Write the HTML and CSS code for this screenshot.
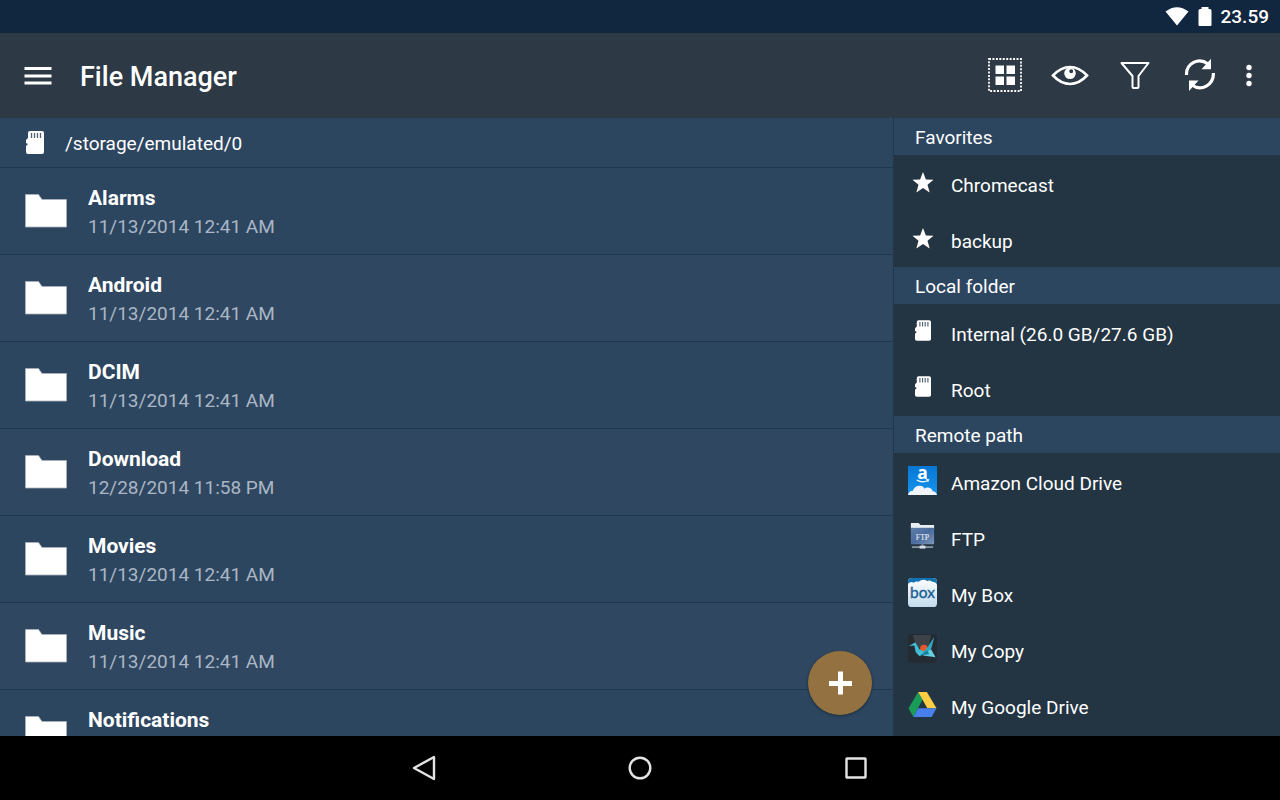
FILE: index.html
```html
<!DOCTYPE html>
<html lang="en">
<head>
<meta charset="utf-8">
<meta name="viewport" content="width=device-width, initial-scale=1">
<title>File Manager</title>
<link rel="stylesheet" href="styles.css">
</head>
<body>
<svg class="defs" aria-hidden="true">
  <symbol id="sd" viewBox="0 0 18 24">
    <path fill="#fff" d="M4 0h12q2 0 2 2v19q0 2-2 2H2q-2 0-2-2v-6l2-2-2-1V9l2-2V2q0-2 2-2z"/>
    <path stroke="#526272" stroke-width="1.300" d="M5.500 2v5M8.500 2v5M11.500 2v5M14.500 2v5"/>
  </symbol>
  <symbol id="folder" viewBox="0 0 42 34">
    <path fill="#fff" stroke="#a9b2bb" stroke-width=".8" d="M.5.5H13.500L17 5.500H41.500V33H.5z"/>
  </symbol>
  <symbol id="star" viewBox="0 0 22 21">
    <path fill="#fff" d="M11 0l2.900 7.500 7.600.3-6 4.900 2.200 7.700L11 16l-6.700 4.400 2.200-7.700-6-4.900 7.600-.3z"/>
  </symbol>
</svg>
<div class="screen">
  <div class="status">
    <svg width="24" height="20" viewBox="0 0 24 20" aria-hidden="true"><path fill="#fff" d="M.5 4.500Q12-4 23.500 4.500L12 18.500z"/></svg>
    <svg width="14" height="20" viewBox="0 0 14 20" aria-hidden="true"><path fill="#fff" d="M3.500 0h7v2H12q1.500 0 1.500 1.500V18q0 1-1 1h-11q-1 0-1-1V3.500Q.5 2 2 2h1.500z"/></svg>
    <time>23.59</time>
  </div>
  <header class="toolbar">
    <button class="icon-button" aria-label="Menu"><svg width="28" height="20" viewBox="0 0 28 20"><path stroke="#fff" stroke-width="2.800" d="M.5 2.500h27M.5 10h27M.5 17h27"/></svg></button>
    <h1>File Manager</h1>
    <div class="actions">
      <button class="icon-button" aria-label="Select all"><svg width="34" height="34" viewBox="0 0 34 34"><path fill="none" stroke="#fff" stroke-width="1.800" stroke-dasharray="2 1.440" d="M1 1h32v32H1z"/><path fill="#fff" d="M7.500 7.500h8.500v8.500H7.500zM18.500 7.500H27v8.500h-8.500zM7.500 18.500h8.500V27H7.500zM18.500 18.500H27V27h-8.500z"/></svg></button>
      <button class="icon-button" aria-label="View"><svg width="38" height="34" viewBox="0 0 38 34"><path fill="none" stroke="#fff" stroke-width="2.600" d="M2 17.500Q10 9 19 9t17 8.500Q28 26 19 26T2 17.500z"/><path fill="#fff" fill-rule="evenodd" d="M19 9.500a5.800 5.800 0 1 1 0 11.600 5.800 5.800 0 0 1 0-11.600zm-.8 3.800a2 2 0 1 0 4 0 2 2 0 0 0-4 0z"/></svg></button>
      <button class="icon-button" aria-label="Filter"><svg width="30" height="34" viewBox="0 0 30 34"><path fill="none" stroke="#fff" stroke-width="2" stroke-linejoin="round" d="M1.500 5h27L18.500 18v11q0 1-1 1h-4q-1 0-1-1V18z"/></svg></button>
      <button class="icon-button" aria-label="Refresh"><svg width="32" height="34" viewBox="0 0 32 34"><path fill="none" stroke="#fff" stroke-width="3.200" d="M2.500 17C2 5 15-1 24 6M29.500 15c0 12-12 19-21.500 12"/><path fill="#fff" d="M27 .8v10.500H17.500zM5 33V22.500h9.500z"/></svg></button>
      <button class="icon-button more" aria-label="More options"><svg width="8" height="24" viewBox="0 0 8 24"><circle cx="4" cy="4.500" r="2.700" fill="#fff"/><circle cx="4" cy="12.500" r="2.700" fill="#fff"/><circle cx="4" cy="20.500" r="2.700" fill="#fff"/></svg></button>
    </div>
  </header>
  <div class="content">
    <main class="browser">
      <div class="path"><svg width="18" height="24" aria-hidden="true"><use href="#sd"/></svg><span>/storage/emulated/0</span></div>
      <ul class="files">
        <li><svg width="42" height="34" aria-hidden="true"><use href="#folder"/></svg><div><h2>Alarms</h2><p>11/13/2014 12:41 AM</p></div></li>
        <li><svg width="42" height="34" aria-hidden="true"><use href="#folder"/></svg><div><h2>Android</h2><p>11/13/2014 12:41 AM</p></div></li>
        <li><svg width="42" height="34" aria-hidden="true"><use href="#folder"/></svg><div><h2>DCIM</h2><p>11/13/2014 12:41 AM</p></div></li>
        <li><svg width="42" height="34" aria-hidden="true"><use href="#folder"/></svg><div><h2>Download</h2><p>12/28/2014 11:58 PM</p></div></li>
        <li><svg width="42" height="34" aria-hidden="true"><use href="#folder"/></svg><div><h2>Movies</h2><p>11/13/2014 12:41 AM</p></div></li>
        <li><svg width="42" height="34" aria-hidden="true"><use href="#folder"/></svg><div><h2>Music</h2><p>11/13/2014 12:41 AM</p></div></li>
        <li><svg width="42" height="34" aria-hidden="true"><use href="#folder"/></svg><div><h2>Notifications</h2></div></li>
      </ul>
      <button class="add" aria-label="Add"><svg width="24" height="24" viewBox="0 0 24 24"><path stroke="#fff" stroke-width="5" d="M12.500.5v23M1 12.500h23"/></svg></button>
    </main>
    <aside class="places">
      <h2>Favorites</h2>
      <ul>
        <li><a href="#chromecast"><svg width="22" height="21" aria-hidden="true"><use href="#star"/></svg><span>Chromecast</span></a></li>
        <li><a href="#backup"><svg width="22" height="21" aria-hidden="true"><use href="#star"/></svg><span>backup</span></a></li>
      </ul>
      <h2>Local folder</h2>
      <ul>
        <li><a href="#internal"><svg width="16" height="22" aria-hidden="true"><use href="#sd"/></svg><span>Internal (26.0 GB/27.6 GB)</span></a></li>
        <li><a href="#root"><svg width="16" height="22" aria-hidden="true"><use href="#sd"/></svg><span>Root</span></a></li>
      </ul>
      <h2>Remote path</h2>
      <ul>
        <li><a href="#amazon"><svg class="logo" width="29" height="29" viewBox="0 0 30 30" aria-hidden="true">
          <defs><linearGradient id="sky" x2="0" y2="1"><stop stop-color="#0877d4"/><stop offset="1" stop-color="#1494ee"/></linearGradient></defs>
          <path fill="url(#sky)" d="M0 0h30v30H0z"/>
          <text class="logo-a" x="15" y="13" text-anchor="middle">a</text>
          <path fill="none" stroke="#fff" stroke-width="1.200" d="M9 14.500q6 3.500 11.500.5M19 14l2.200.2-.8 2"/>
          <path fill="#f1f5f9" d="M0 30q1-4.500 5-4.500 2-5 7-5 4 0 5 3 2-2 5-1 3 1 3.500 3.500 3.500 0 4.500 4z"/></svg><span>Amazon Cloud Drive</span></a></li>
        <li><a href="#ftp"><svg class="logo" width="29" height="29" viewBox="0 0 30 30" aria-hidden="true">
          <defs><linearGradient id="net" x2="1" y2="1"><stop stop-color="#617ea9"/><stop offset=".5" stop-color="#4b6c9d"/><stop offset="1" stop-color="#7d98bd"/></linearGradient></defs>
          <path fill="#e8edf2" d="M3 1h8l2 2h14v4H3z"/><path fill="url(#net)" d="M3 6h24v17H3z"/>
          <text class="logo-ftp" x="15" y="19" text-anchor="middle">FTP</text>
          <path stroke="#8c99a6" stroke-width="1.800" d="M15 23v3M4 26h22"/><path stroke="#d6dde3" stroke-width="3" d="M12 26h6"/></svg><span>FTP</span></a></li>
        <li><a href="#box"><svg class="logo" width="29" height="29" viewBox="0 0 30 30" aria-hidden="true">
          <defs><linearGradient id="pale" x2="0" y2="1"><stop stop-color="#fff"/><stop offset="1" stop-color="#c3dbed"/></linearGradient></defs>
          <rect width="30" height="30" rx="4" fill="url(#pale)"/>
          <path fill="#1273b0" d="M0 6V4q0-4 4-4h22q4 0 4 4v3q-1-3-5-3-2-2-5-1Q15 0 11 4 8 3 6 5 3 3 0 6z"/>
          <text class="logo-box" x="15" y="21" text-anchor="middle">box</text></svg><span>My Box</span></a></li>
        <li><a href="#copy"><svg class="logo" width="29" height="29" viewBox="0 0 30 30" aria-hidden="true">
          <rect width="30" height="30" rx="4" fill="#252b32"/><path fill="#3d4248" d="M5 1h19l-3 13H9z"/>
          <circle cx="16.500" cy="15" r="4" fill="#e4582b"/>
          <path fill="#3ebdd3" d="M1 12.500L7.500 8.500 12 16l7 3-7 4-4-4-1.500-7z"/>
          <path fill="#2ba9c5" d="M27 3l-1 5-3 11-8 1 5-6z"/>
          <path fill="#62d0e2" d="M10 21l8-2 6-3 4.500 8-11-1.500z"/>
          <path fill="#147f9c" d="M12 22l8-5 2 4z"/></svg><span>My Copy</span></a></li>
        <li><a href="#drive"><svg class="logo" width="29" height="29" viewBox="0 0 30 30" aria-hidden="true">
          <path fill="#189c58" d="M10.500 2L.5 19 5.500 28 15 10z"/><path fill="#fdce44" d="M10.500 2h9l10 17H20z"/><path fill="#477fed" d="M10.500 19h19l-5 9h-19z"/></svg><span>My Google Drive</span></a></li>
      </ul>
    </aside>
  </div>
  <nav class="system" aria-label="System">
    <button class="icon-button" aria-label="Back"><svg width="26" height="26" viewBox="0 0 26 26"><path fill="none" stroke="#e4e4e4" stroke-width="2.400" stroke-linejoin="round" d="M23 2v22L3 13z"/></svg></button>
    <button class="icon-button" aria-label="Home"><svg width="26" height="26" viewBox="0 0 26 26"><circle cx="13" cy="13" r="10.300" fill="none" stroke="#e4e4e4" stroke-width="2.400"/></svg></button>
    <button class="icon-button" aria-label="Recent apps"><svg width="26" height="26" viewBox="0 0 26 26"><rect x="3.500" y="3.500" width="19" height="19" rx=".5" fill="none" stroke="#e4e4e4" stroke-width="2.400"/></svg></button>
  </nav>
</div>
</body>
</html>
```
FILE: styles.css
```css
* {
  box-sizing: border-box;
}

body,
h1,
h2,
p,
ul {
  margin: 0;
  padding: 0;
}

body {
  font-family: Roboto, "Liberation Sans", sans-serif;
  font-size: 19px;
  line-height: 24px;
  color: #fff;
  background: #000;
}

ul {
  list-style: none;
}

svg {
  display: block;
  flex: none;
}

.defs {
  position: absolute;
  width: 0;
  height: 0;
}

.screen {
  display: flex;
  flex-direction: column;
  height: 100vh;
}

.status {
  display: flex;
  flex: none;
  align-items: center;
  justify-content: flex-end;
  gap: 9px;
  height: 33px;
  padding: 0 11px;
  background: #11263f;
}

.status time {
  padding-top: 1px;
  font-weight: 500;
}

.toolbar {
  display: flex;
  flex: none;
  align-items: center;
  gap: 28px;
  height: 85px;
  padding: 0 15px 0 24px;
  background: #2d3944;
}

.toolbar h1 {
  padding-top: 2px;
  font-size: 27px;
  font-weight: 500;
  line-height: 32px;
}

.icon-button {
  display: grid;
  place-items: center;
  padding: 0;
  border: 0;
  background: none;
}

.actions {
  display: flex;
  align-items: center;
  margin-left: auto;
  padding-bottom: 2px;
}

.actions .icon-button {
  width: 65px;
}

.actions .more {
  width: 33px;
}

.content {
  display: grid;
  flex: 1;
  grid-template-columns: minmax(0, 1fr) 387px;
  min-height: 0;
}

.browser {
  position: relative;
  overflow: hidden;
  background: #2d4660;
}

.path {
  display: flex;
  align-items: center;
  gap: 21px;
  height: 50px;
  padding-left: 26px;
  border-bottom: 1px solid #20384e;
}

.path span {
  padding-top: 2px;
}

.files li {
  display: flex;
  align-items: flex-start;
  gap: 21px;
  height: 87px;
  padding: 16px 0 0 25px;
  border-bottom: 1px solid #20384e;
}

.files li:nth-child(even) {
  background: #2f4760;
}

.files svg {
  margin-top: 10px;
}

.files h2 {
  font-size: 21px;
  font-weight: 700;
  line-height: 28px;
}

.files p {
  line-height: 30px;
  color: #aab6c5;
}

.add {
  position: absolute;
  right: 21px;
  bottom: 21px;
  display: grid;
  place-items: center;
  width: 64px;
  height: 64px;
  padding: 0;
  border: 0;
  border-radius: 50%;
  background: #937140;
  box-shadow: 0 1px 3px rgba(0, 0, 0, 0.4);
}

.places {
  overflow: hidden;
  border-left: 1px solid #20384e;
  background: #233442;
}

.places h2 {
  padding: 8px 21px 5px;
  font-size: 19px;
  font-weight: 400;
  line-height: 24px;
  background: #2d4660;
}

.places a {
  display: grid;
  grid-template-columns: 29px 1fr;
  gap: 14px;
  align-items: center;
  height: 56px;
  padding: 0 14px;
  color: inherit;
  text-decoration: none;
}

.places a svg {
  justify-self: center;
  margin-bottom: 2px;
}

.places a span {
  padding-top: 6px;
}

.logo {
  overflow: visible;
}

.logo-a {
  font: 700 18px "Open Sans", sans-serif;
  fill: #fff;
}

.logo-ftp {
  font: 8px "Liberation Serif", serif;
  fill: #fff;
}

.logo-box {
  font: 16px Lato, sans-serif;
  fill: #1c5f94;
  stroke: #1c5f94;
  stroke-width: 0.4px;
}

.system {
  display: flex;
  flex: none;
  align-items: center;
  justify-content: center;
  gap: 190px;
  height: 64px;
  background: #000;
}
```
